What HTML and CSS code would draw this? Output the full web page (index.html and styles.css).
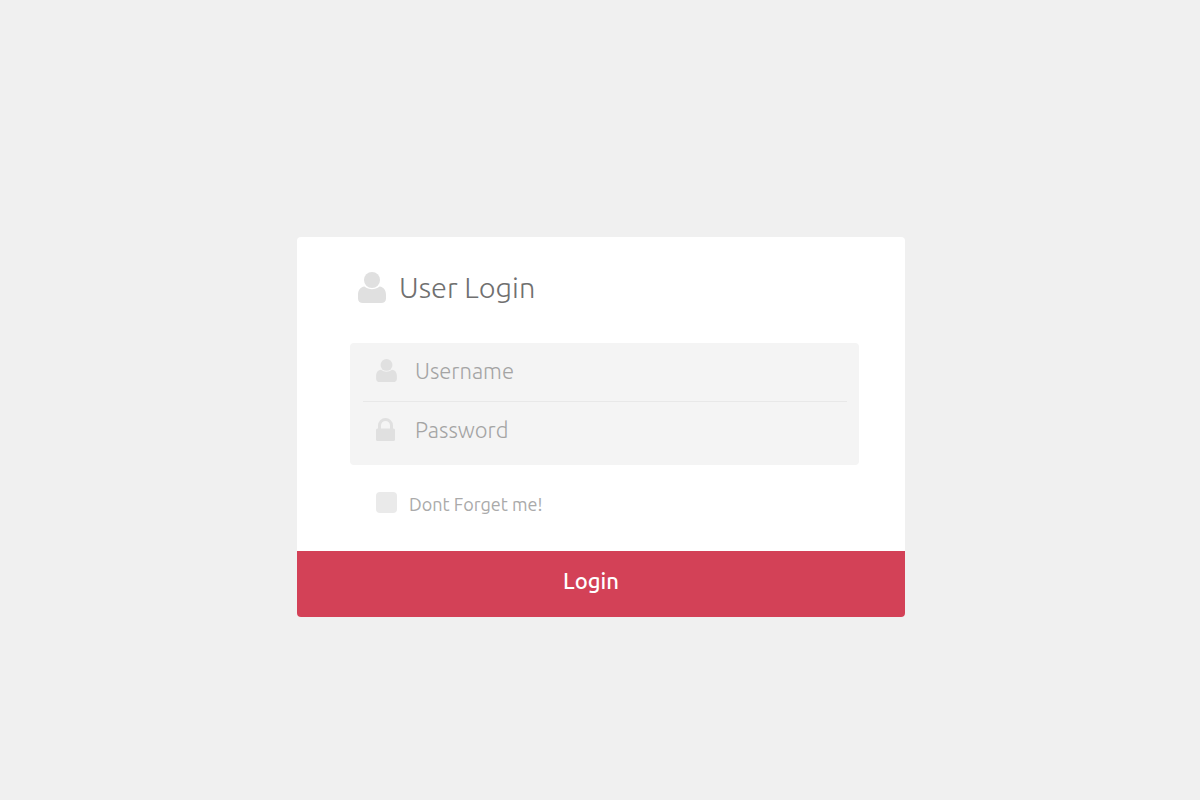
FILE: index.html
```
<!DOCTYPE html>
<html lang="en">

<head>
    <meta charset="UTF-8">
    <meta name="viewport" content="width=device-width, initial-scale=1">
    <title>User Login</title>
    <link rel="stylesheet" href="styles.css">
</head>

<body>
    <form class="login-box">
        <div class="login-body">
            <!-- Title -->
            <h1 class="login-title">
                <svg class="title-icon" viewBox="0 0 28 31" aria-hidden="true">
                    <ellipse cx="14" cy="8" rx="8" ry="8" />
                    <path d="M6.500 14.500C2 15 0 18.500 0 23V26.500C0 29.500 2 31 5 31H23C26 31 28 29.500 28 26.500V23C28 18.500 26 15 21.500 14.500C17 18 11 18 6.500 14.500Z" />
                </svg>
                User Login
            </h1>

            <!-- Fields -->
            <div class="fields">
                <div class="field">
                    <label for="username" aria-label="Username">
                        <svg class="user-icon" viewBox="0 0 28 31" aria-hidden="true">
                            <ellipse cx="14" cy="8" rx="8" ry="8" />
                            <path d="M6.500 14.500C2 15 0 18.500 0 23V26.500C0 29.500 2 31 5 31H23C26 31 28 29.500 28 26.500V23C28 18.500 26 15 21.500 14.500C17 18 11 18 6.500 14.500Z" />
                        </svg>
                    </label>
                    <input type="text" id="username" placeholder="Username" required>
                </div>
                <div class="field">
                    <label for="password" aria-label="Password">
                        <svg class="lock-icon" viewBox="0 0 19 23" aria-hidden="true">
                            <path d="M3.500 12V7.500A6 6 0 0 1 15.500 7.500V12" />
                            <rect x="0" y="10.500" width="19" height="12.500" rx="1.500" />
                        </svg>
                    </label>
                    <input type="password" id="password" placeholder="Password" required>
                </div>
            </div>

            <div class="remember">
                <input type="checkbox" id="remember">
                <label for="remember">Dont Forget me!</label>
            </div>
        </div>
        <button type="submit">Login</button>
    </form>
</body>

</html>
```
FILE: styles.css
```
* {
    box-sizing: border-box;
}

body {
    font-family: Ubuntu, 'Open Sans', sans-serif;
    background-color: #f0f0f0;
    display: flex;
    justify-content: center;
    align-items: center;
    min-height: 100vh;
    margin: 0;
    padding: 54px 0 0 2px;
}

.login-box {
    background-color: #fff;
    width: 100%;
    max-width: 608px;
    border-radius: 4px;
    overflow: hidden;
}

.login-body {
    padding: 28px 46px 35px 53px;
}

.login-title {
    display: flex;
    align-items: center;
    gap: 13px;
    margin: 0 0 34px;
    padding-left: 8px;
    font-size: 29px;
    line-height: 44px;
    font-weight: 300;
    color: #707070;
}

.login-box svg {
    display: block;
    fill: #e0e0e0;
}

.title-icon {
    width: 28px;
    height: 31px;
}

.fields {
    background-color: #f4f4f4;
    border-radius: 4px;
    padding: 0 12px 5px 13px;
}

.field {
    display: flex;
    align-items: center;
    padding: 0 0 4px 13px;
}

.field + .field {
    border-top: 1px solid #e8e8e8;
}

.field label {
    width: 39px;
}

.user-icon {
    width: 21px;
    height: 23px;
}

.lock-icon {
    width: 19px;
    height: 23px;
}

.lock-icon path {
    fill: none;
    stroke: #e0e0e0;
    stroke-width: 3;
}

.field input {
    flex: 1;
    min-width: 0;
    height: 54px;
    padding: 0;
    border: none;
    outline: none;
    background: transparent;
    font-family: inherit;
    font-size: 22px;
    font-weight: 300;
    color: #777;
}

.field input::placeholder {
    color: #a4a4a4;
}

.remember {
    display: flex;
    align-items: flex-start;
    gap: 12px;
    margin-top: 27px;
    padding-left: 26px;
}

.remember input {
    appearance: none;
    width: 21px;
    height: 21px;
    margin: 0;
    background-color: #eaeaea;
    border-radius: 4px;
    cursor: pointer;
}

.remember input:checked {
    background-color: #d34157;
}

.remember label {
    font-size: 18px;
    line-height: 24px;
    color: #aaa;
}

.login-box button {
    display: block;
    width: 100%;
    height: 66px;
    padding: 0 20px 8px 0;
    border: none;
    background-color: #d34157;
    color: #fff;
    font-family: inherit;
    font-size: 22px;
    font-weight: 500;
    cursor: pointer;
}
```
